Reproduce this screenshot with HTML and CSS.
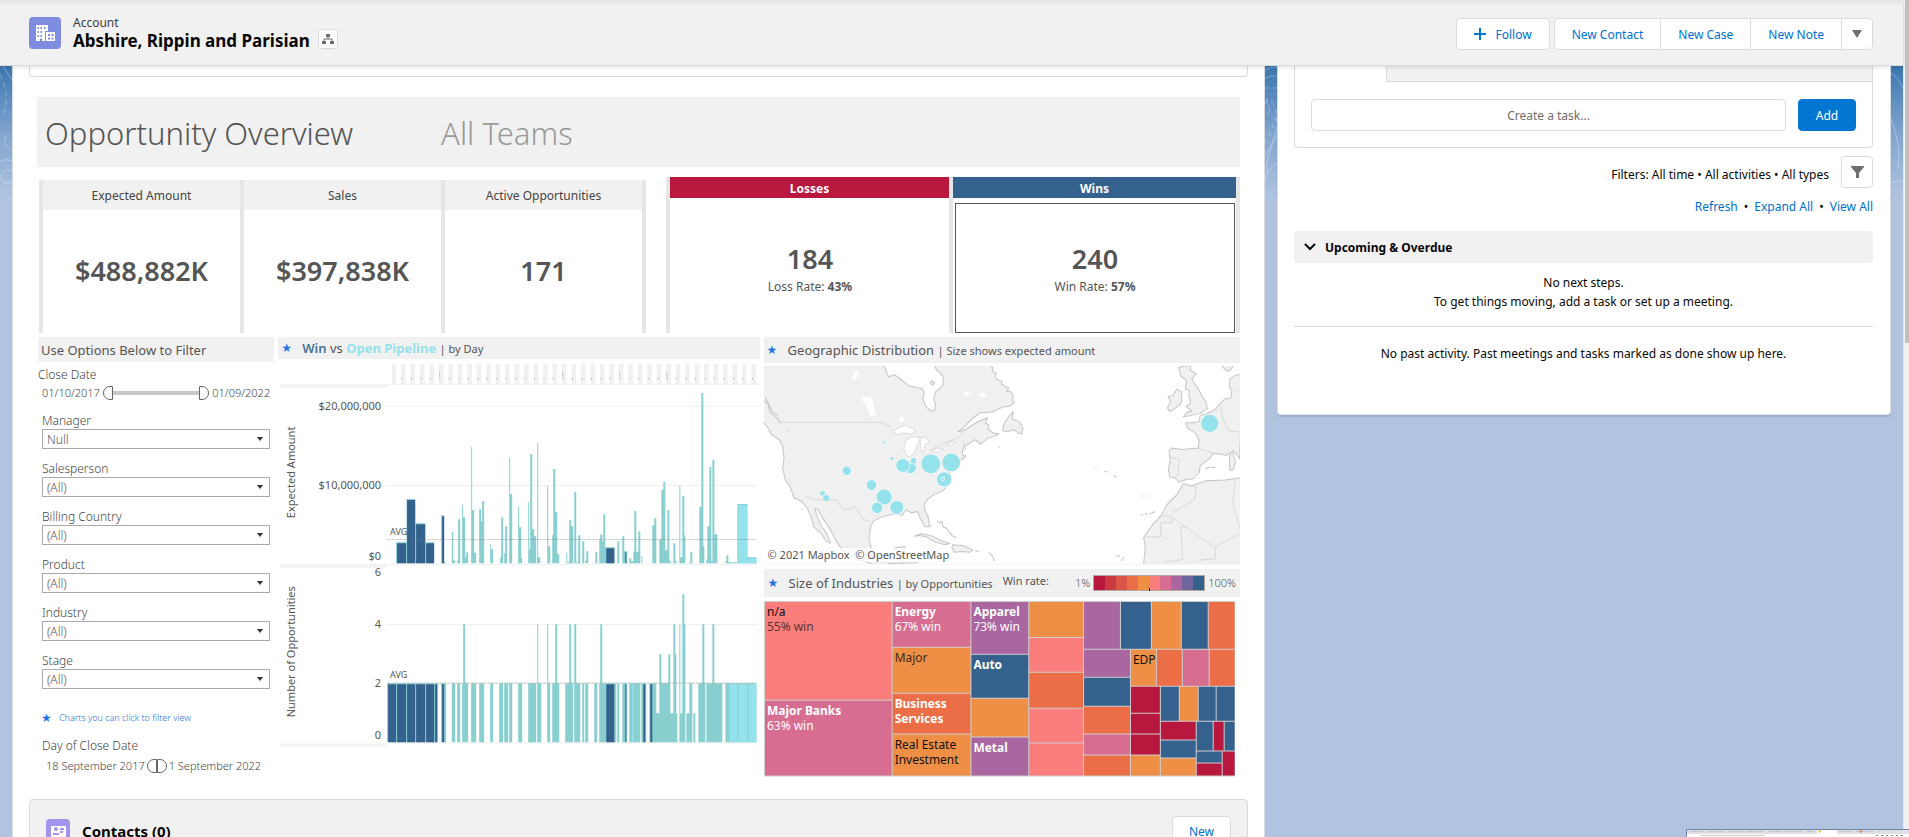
FILE: index.html
```html
<!DOCTYPE html>
<html lang="en">
<head>
<meta charset="utf-8">
<title>Abshire, Rippin and Parisian | Account</title>
<link rel="stylesheet" href="styles.css">
</head>
<body>
<div class="app">
<header class="record-header">
  <svg class="account-icon" viewBox="0 0 32 32" aria-hidden="true"><rect width="32" height="32" rx="4" fill="#7f8de1"/><path fill="#fff" d="M7 8h12v6h-3v10H7zM17 15h9v9h-9z"/><path fill="#7f8de1" d="M8.500 10h1.500v2H8.500zM11.500 10H13v2h-1.500zM15 10h1.500v2H15zM8.500 14h1.500v2H8.500zM11.500 14H13v2h-1.500zM8.500 18h1.500v2H8.500zM11.500 18H13v2h-1.500zM11 21.500h2V24h-2zM19 17h2v2h-2zM22.500 17h2v2h-2zM19 20.500h2v2h-2zM22.500 20.500h2v2h-2z"/></svg>
  <div class="record-title"><p>Account</p><h1>Abshire, Rippin and Parisian</h1></div>
  <button class="icon-button hierarchy" aria-label="View account hierarchy"><svg viewBox="0 0 12 12" width="12" height="12"><path fill="#706e6b" d="M4 1h4v3H4zM0 8h4v3H0zM8 8h4v3H8z"/><path fill="none" stroke="#706e6b" d="M6 4v2M2 8V6h8v2"/></svg></button>
  <div class="actions">
    <button class="button follow"><svg viewBox="0 0 12 12" width="12" height="12"><path d="M6 0v12M0 6h12" stroke="#0076d3" stroke-width="2"/></svg>Follow</button>
    <div class="button-group"><button class="button">New Contact</button><button class="button">New Case</button><button class="button">New Note</button><button class="button more" aria-label="More actions"><svg viewBox="0 0 10 8" width="10" height="8"><path fill="#706e6b" d="M0 0h10L5 8z"/></svg></button></div>
  </div>
</header>
<div class="page">
<svg class="topography" viewBox="0 0 1903 130" preserveAspectRatio="none" aria-hidden="true"><g fill="none" stroke="#fff" stroke-opacity=".3"><path d="M3 0q5 8 9 14M6 68q-4 12 3 14M0 96q6-4 12-1M12 105q-9-4-11 6 2 9 11 5"/><path stroke-dasharray="5 4" d="M0 8q10 20 4 40"/><path d="M1264 5q7-5 13-4M1264 13q8-5 13-2M1264 40q5-12 3-4 5 11 0 13M1277 69q-13 25-10 38M1264 91q9-11 13-31M1264 119q4-18 13-22"/><path stroke-dasharray="5 4" d="M1264 22h13M1271 36q7 5 5 20M1264 78q7-9 12-28"/><path d="M1891 7q8 5 12 16M1891 52q11 30 7 50M1891 118q6-5 12-2"/></g></svg>
<main class="panel main-panel">
  <div class="card-tail"></div>
  <section class="dashboard" aria-label="Opportunity dashboard">
    <div class="dash-title"><h2>Opportunity Overview</h2><span>All Teams</span></div>
    <div class="kpis">
      <div class="totals">
        <div class="kpi"><h3>Expected Amount</h3><strong>$488,882K</strong></div>
        <div class="kpi"><h3>Sales</h3><strong>$397,838K</strong></div>
        <div class="kpi"><h3>Active Opportunities</h3><strong>171</strong></div>
      </div>
      <div class="outcomes">
        <div class="outcome losses"><h3>Losses</h3><div class="result"><strong>184</strong><p>Loss Rate: <b>43%</b></p></div></div>
        <div class="outcome wins"><h3>Wins</h3><div class="result"><strong>240</strong><p>Win Rate: <b>57%</b></p></div></div>
      </div>
    </div>
    <div class="boards">
      <form class="filters">
        <h3 class="bar">Use Options Below to Filter</h3>
        <p class="legend">Close Date</p>
        <div class="dates"><span>01/10/2017</span><div class="range"><input type="range" class="from" value="0" aria-label="Close date from"><input type="range" class="to" value="100" aria-label="Close date to"></div><span>01/09/2022</span></div>
        <div class="fields">
          <label class="field">Manager<span class="select"><select><option>Null</option></select></span></label>
          <label class="field">Salesperson<span class="select"><select><option>(All)</option></select></span></label>
          <label class="field">Billing Country<span class="select"><select><option>(All)</option></select></span></label>
          <label class="field">Product<span class="select"><select><option>(All)</option></select></span></label>
          <label class="field">Industry<span class="select"><select><option>(All)</option></select></span></label>
          <label class="field">Stage<span class="select"><select><option>(All)</option></select></span></label>
        </div>
        <p class="hint"><span class="star">★</span>Charts you can click to filter view</p>
        <p class="legend day">Day of Close Date</p>
        <div class="dates day-dates"><span>18 September 2017</span><div class="range closed"><input type="range" class="from" value="0" aria-label="Day from"><input type="range" class="to" value="100" aria-label="Day to"></div><span>1 September 2022</span></div>
      </form>
      <section class="trend">
        <h3 class="bar"><span class="star">★</span><span><b class="navy">Win</b> vs <b class="aqua">Open Pipeline</b> <small>| by Day</small></span></h3>
        <svg class="chart" viewBox="279 360 481 400" role="img" aria-label="Expected amount and number of opportunities by day">
          <svg x="275" y="330" width="490" height="240" viewBox="0 0 1470 720">
            <path d="M354 135H1446" stroke="#f1f1f1" stroke-width="60" stroke-dasharray="14 14.400" stroke-dashoffset="2"/>
            <path d="M382 149H1446" stroke="#999" stroke-width="3" stroke-dasharray="3 25.400"/>
            <path d="M496 126v18M865 126v18M1036 126v18M1177 126v18" stroke="#ccc" stroke-width="3"/>
            <path d="M339 166H1455M339 232H1446M339 469H1446M339 705H1449" stroke="#f0f0f0" stroke-width="3"/>
            <path d="M18 171H339M18 711H339" stroke="#f3f3f3" stroke-width="11"/>
            <path fill="#89cfcf" d="M366 702V639H397V510H424V582H454V639H480V702zM501 702V558h9V699h6V702zM533 702V608h4V693h6V702zM549 702V693h3V570h6V702zM564 702V528h3V564h6V685h3V669h6V702zM591 702V354h3V543h6V671h6V702zM615 702V540h6V576h3V516h6V702zM648 702V645h3V660h6V702zM678 702V684h3V564h6V702zM690 702V672h3V591h6V702zM705 702V387h3V495h6V702zM732 702V534h3V594h6V687h3V702zM762 702V519h3V660h3V375h6V600h6V621h6V702zM789 702V342h3V684h6V702zM819 702V471h3V651h6V702zM834 702V618h3V420h6V549h6V675h6V702zM876 702V672h3V699h6V573h6V591h6V702zM900 702V489h6V699h6V618h6V702zM924 702V636h6V702zM933 702V693h3V666h6V702zM963 702V669h6V702zM975 702V630h3V615h6V636h3V555h6V654h28V702zM1029 702V636h6V702zM1044 702V621h6V666h9V702zM1065 702V687h6V696h6V669h3V546h6V668h6V606h6V702zM1101 702V681h3V702zM1134 702V588h6V567h6V702zM1155 702V630h6V483h6V459h6V663h6V543h6V693h3V699h3V702zM1197 702V642h6V696h3V702zM1215 702V471h3V684h6V501h6V618h3V702zM1245 702V699h3V669h6V702zM1275 702V534h6V192h6V651h3V702zM1296 702V690h3V591h6V414h6V696h3V393h6V615h9V702zM1353 702V696h3V678h6V699h27V525h30V684h27V702z"/>
            <path fill="#34618e" d="M369 702V642h27V702zM399 702V513h24V702zM426 702V585h27V702zM456 702V642h24V702zM504 702V561h6V702zM996 702V657h24V702zM1053 702V669h3V702z"/>
            <path fill="#93e2ec" d="M1392 702V528h27V702zM1421 702V687h25V702z"/>
            <path d="M339 631H1446" stroke="#777" stroke-opacity=".4" stroke-width="3" stroke-dasharray="9 3"/>
          </svg>
          <svg x="275" y="560" width="490" height="200" viewBox="0 0 1470 600">
            <path d="M339 196H1446M339 373H1446M354 551H1453" stroke="#f0f0f0" stroke-width="3"/>
            <path d="M18 20H339M18 558H339" stroke="#f3f3f3" stroke-width="11"/>
            <path fill="#89cfcf" d="M339 549V372H492V549zM501 549V372h15V549zM533 549V372h10V549zM549 549V372h9V549zM564 549V372h3V195h6V372h9V549zM591 549V372h15V549zM615 549V372h15V549zM648 549V372h9V549zM675 549V372h12V549zM690 549V372h12V549zM705 549V372h9V549zM732 549V372h12V549zM762 549V372h24V549zM789 549V195h3V372h9V549zM819 549V195h3V372h6V549zM834 549V372h9V195h6V372h6V549zM873 549V372h12V195h6V372h6V549zM900 549V195h6V372h12V549zM924 549V372h6V549zM933 549V372h9V549zM960 549V372h9V549zM975 549V372h3V195h6V372h42V549zM1029 549V372h6V549zM1044 549V372h15V549zM1065 549V372h33V549zM1101 549V372h15V549zM1125 549V372h21V462h9V285h6V372h21V285h6V462h9V195h6V285h3V462h3V549zM1215 549V195h3V462h6V105h6V195h3V549zM1236 549V462h9V372h9V549zM1257 549V462h6V549zM1272 549V372h12V195h6V372h3V549zM1296 549V372h18V195h6V372h24V549zM1353 549V372h93V549z"/>
            <path fill="#34618e" d="M342 549V375h24V549zM369 549V375h27V549zM399 549V375h24V549zM426 549V375h27V549zM456 549V375h24V549zM483 549V375h6V549zM504 549V375h6V549zM996 549V375h24V549zM1053 549V375h3V549zM1107 549V375h6V549zM1128 549V375h6V549z"/>
            <path fill="#93e2ec" d="M1365 549V375h24V549zM1392 549V375h27V549zM1422 549V375h24V549zM1073 549V375h4V549z"/>
            <path d="M339 371H1446" stroke="#999" stroke-opacity=".5" stroke-width="3" stroke-dasharray="9 3"/>
          </svg>
          <g class="ticks"><text x="382" y="411">$20,000,000</text><text x="382" y="490">$10,000,000</text><text x="382" y="561">$0</text><text x="382" y="577">6</text><text x="382" y="629">4</text><text x="382" y="688">2</text><text x="382" y="740">0</text></g>
          <g class="avg"><text x="391" y="536">AVG</text><text x="391" y="679">AVG</text></g>
          <g class="axis"><text transform="translate(296 519) rotate(-90)">Expected Amount</text><text transform="translate(296 718) rotate(-90)">Number of Opportunities</text></g>
        </svg>
      </section>
      <div class="right-boards">
        <section class="geo">
          <h3 class="bar"><span class="star">★</span><span>Geographic Distribution <small>| Size shows expected amount</small></span></h3>
          <div class="map">
          <svg viewBox="27 96 1428 594" role="img" aria-label="Map of expected amount">
            <g fill="#f0f0f0" stroke="#c4c4c4" stroke-width="3" stroke-linejoin="round">
              <path d="M20 90H385l7 18 8 20 18-6 22 16 20 17 22 5 20 4 5 12-4 20 10 22 14 12 12 0 2-18-5-20 6-20 14-10 8-12 0-20-8-12-12-10-4-8 0-20H697l4 12 12 8-2 10 12 10-4 6 8 12 14 4-2 8 8 6 14 6-8 10 12 0 10 14-4 8 6 14-14 8-22 4-30 14-36 2-26 20-24 25-16 12 22-6 36-24 30-12-6 16 10 6-2 12 16 12 16 2-14 8-20 6-22 18-6-8-10-6-14 10-18 10-5 16 2 12 7-1-1 6-18 10-12 16-14 8-3 12 4 14-8 22-10 12-14 10-16 6-22 16-10 16 2 16 10 20 4 30-14 0-14-26-8-20-18 4-16-9-12 17-20-5-24 5-18 5-24 12-9 18-4 34 6 28 16 34 46-10 10-24 30-4-3 28-12 50H400l-60-30-64-18-16-22-20-30-15-30-20-30-18-30-8-2 8 26 12 26 16 24 12 28-14-6-12-20-24-22-8-28-12-28-16-20-24-12-12-34-14-18-8-38 4-28-4-36-10-20-24-16-12-22-16-20-14-12z"/>
              <path d="M742 290l4-20 14-22 14-16-4 22 22 8 11 20-4 18-8-2-14-10-18 4z"/>
              <path d="M478 606l20-8 34 8 26 14 26 8-14 4-30-8-26-16-22-4zM592 632l30 2 32 14-10 6-26-2-20 2-8-12zM525 576l6-2M660 650l12 2M700 655l12 10 6 16M546 560l8 6 6-4 4 16 12 6 16 22 12 4M735 340l-6-2"/>
              <path d="M1236 222l10-20-8-14 16-4 10-18 14 6 2 22-4 16-18 14-14 8zM1270 100l36-6-2 14 18 12-12 14 6 12 14 20 12 24 10 14 4 20-22 14-26 6-24 4 12-14 14-2-18-16 12-6 2-14-6-8 2-18-12-6 4-24-18-14zM1398 94h36l-8 14-12 4zM1424 356l8-4 8 30-6 24-10 4-2-22zM1350 405l10-6 6 0M1368 400l12 0"/>
              <path d="M1460 120l-20 4-16 10-2 24 8 12-4 22-16 2-18 16-14 18-26 12-18 4-2 18-14 4-27 0 6 16 24 16 10 20-2 24-50 4-30-4-8 8 4 28-6 26 4 24 16 4 14 12 16-6 24-4 18-18 4-22 30-22 6-12 20-2 22 6 22-14 18 24z"/>
              <path d="M1460 430l-50 8-58 2-44 16-24-8-18 32-30 30-20 36-26 28-25 36 5 30-6 60H1460z"/>
              <path d="M27 200l12 10 6 26 20 14 12 18M30 190l10 18 12 26 16 10M1048 412l10 2M1076 424l8 6M1020 402h4M1156 540l8 4M1170 536l6 6M1182 540l18-8M1164 486h4M1082 664l12 2M1098 680l8-12M400 688l90-2M140 528l-2-4M526 146l6-6 6 8-6 6z"/>
            </g>
            <g fill="#fff" stroke="#cfcfcf" stroke-width="2"><path d="M412 294l20-14 20-6 30 14-12 12-26-4-18 6zM456 366l-10-20 4-24 16-12 20-2 18 4-14 12-8 22-8 14-10 8zM490 312l20-4 12 16-12 8-8 26-6-16 0-20zM528 350l20-8 16 2-20 12zM572 332l14-8 18 0-14 10z"/></g>
            <path fill="#fff" d="M316 192l22-6 12 6 8 30 6 24-10-4-8 6-10-28zM290 134l12-26 8 6-8 22zM622 182l12-12 12 14zM670 186l10-14 14 14-10 4zM434 250h12l-2 14-12-4z"/>
            <path fill="none" stroke="#cdcdcd" stroke-width="2" d="M78 265H375l34 14M524 350l40-22 44-16 16-20M632 350l-8-28M150 487l34 10h60l20 28h20l14-8 28 40 18 6M1250 370l22 6-6 52M1325 343l50 14M1395 215l8 40 16 36M1418 290l36 4M1284 450l38 8-4 38-66 40M1250 546h-40M1250 550l128 90 76-42M1250 550v16h-34v42h-46M1290 578h-14l6 98-52 8M1440 434l-8 70 22 80M1380 640v34l-50 4"/>
            <g fill="#93e2ec" stroke="#f4f4f4" stroke-width="3"><circle cx="275" cy="410" r="14"/><circle cx="465" cy="400" r="19"/><circle cx="443" cy="394" r="21"/><circle cx="475" cy="380" r="10"/><circle cx="527" cy="389" r="30"/><circle cx="588" cy="385" r="28"/><circle cx="567" cy="436" r="23"/><circle cx="563" cy="434" r="5"/><circle cx="349" cy="453" r="16"/><circle cx="387" cy="489" r="24"/><circle cx="425" cy="520" r="21"/><circle cx="366" cy="521" r="17"/><circle cx="203" cy="478" r="9"/><circle cx="213" cy="492" r="11"/><circle cx="388" cy="325" r="5"/><circle cx="410" cy="373" r="6"/><circle cx="98" cy="288" r="4"/><circle cx="257" cy="458" r="3"/><circle cx="1363" cy="268" r="27"/></g>
          </svg>
          <p class="credit">© 2021 Mapbox&nbsp; © OpenStreetMap</p>
          </div>
        </section>
        <section class="industries">
          <div class="bar"><span class="star">★</span><h3>Size of Industries <small>| by Opportunities</small></h3><span class="win-rate">Win rate:</span><div class="scale"><span>1%</span><svg viewBox="0 0 112 16" width="112" height="16" aria-hidden="true"><path fill="#b3a79c" d="M0 0h112v16H0z"/><path fill="#b8173e" d="M1 1h11v14H1z"/><path fill="#c93a43" d="M12 1h11v14H12z"/><path fill="#db5549" d="M23 1h11v14H23z"/><path fill="#ec6e48" d="M34 1h11v14H34z"/><path fill="#ef8f46" d="M45 1h11v14H45z"/><path fill="#f97e7c" d="M56 1h11v14H56z"/><path fill="#d86d92" d="M67 1h11v14H67z"/><path fill="#a966a1" d="M78 1h11v14H78z"/><path fill="#6f66a0" d="M89 1h11v14H89z"/><path fill="#34618e" d="M100 1h11v14h-11z"/><path stroke="#000" d="M56.500 13v3"/></svg><span>100%</span></div></div>
          <svg class="treemap" viewBox="764 601 473 176" role="img" aria-label="Industries by opportunities">
            <svg x="755" y="560" width="500" height="230" viewBox="0 0 1500 690">
              <path fill="#cfcfcf" d="M27 123H1446V651H27z"/>
              <path fill="#f97e7c" d="M30 126H411V420H30zM825 234H987V336H825zM825 447H987V549H825zM825 552H987V648H825z"/>
              <path fill="#d86d92" d="M30 423H411V648H30zM414 126H648V261H414zM990 525H1128V585H990zM1287 270H1365V378H1287z"/>
              <path fill="#ee8f45" d="M414 264H648V399H414zM414 525H648V648H414zM651 417H822V531H651zM825 126H987V231H825zM1194 126H1281V267H1194zM1131 270H1206V378H1131zM1278 381H1332V483H1278zM1131 588H1218V648H1131zM1221 597H1326V648H1221z"/>
              <path fill="#ec6e47" d="M414 402H648V522H414zM825 339H987V444H825zM990 441H1128V522H990zM990 588H1128V648H990zM1365 126H1443V267H1365zM1209 270H1284V378H1209zM1368 270H1443V378H1368z"/>
              <path fill="#a966a1" d="M651 126H822V282H651zM651 534H822V648H651zM990 126H1098V267H990zM990 270H1128V351H990z"/>
              <path fill="#34618e" d="M651 285H822V414H651zM990 354H1128V438H990zM1101 126H1191V267H1101zM1284 126H1362V267H1284zM1221 381H1275V483H1221zM1335 381H1386V483H1335zM1389 381H1443V483H1389zM1329 486H1377V573H1329zM1413 486H1443V573H1413zM1221 543H1326V594H1221zM1329 576H1404V609H1329z"/>
              <path fill="#b8173e" d="M1131 381H1218V459H1131zM1131 462H1218V522H1131zM1131 525H1218V585H1131zM1221 486H1326V540H1221zM1380 486H1410V573H1380zM1329 612H1404V648H1329zM1407 576H1443V648H1407z"/>
            </svg>
            <g class="tm-dark"><text x="767" y="616">n/a</text><text x="767" y="631" opacity=".7">55% win</text><text x="895" y="662" opacity=".8">Major</text><text x="895" y="749">Real Estate</text><text x="895" y="764">Investment</text><text x="1134" y="664">EDP</text></g>
            <g class="tm-light"><text x="767" y="715">Major Banks</text><text class="plain" x="767" y="730">63% win</text><text x="895" y="616">Energy</text><text class="plain" x="895" y="631">67% win</text><text x="895" y="708">Business</text><text x="895" y="723">Services</text><text x="974" y="616">Apparel</text><text class="plain" x="974" y="631">73% win</text><text x="974" y="669">Auto</text><text x="974" y="752">Metal</text></g>
          </svg>
        </section>
      </div>
    </div>
  </section>
  <section class="contacts">
    <svg viewBox="0 0 24 24" width="24" height="24" aria-hidden="true"><rect width="24" height="24" rx="4" fill="#a094ed"/><rect x="5" y="7" width="15" height="11" rx="1" fill="#fff"/><circle cx="10" cy="10" r="2" fill="#a094ed"/><path stroke="#a094ed" stroke-width="2" d="M7 15h6M14 10h4M14 13h3"/></svg>
    <h2>Contacts (0)</h2><button class="button">New</button>
  </section>
</main>
<aside class="panel activity">
  <div class="composer"><div class="tab-strip"></div><form class="task"><input type="text" placeholder="Create a task..." aria-label="Create a task"><button type="button" class="button primary">Add</button></form></div>
  <div class="filter-line"><p>Filters: All time • All activities • All types</p><button class="icon-button funnel" aria-label="Filter"><svg viewBox="0 0 13 12" width="13" height="12"><path fill="#706e6b" d="M0 0h13v1L8 7v5H5V7L0 1z"/></svg></button></div>
  <p class="links"><a href="#refresh">Refresh</a><span>•</span><a href="#expand">Expand All</a><span>•</span><a href="#view">View All</a></p>
  <h2 class="upcoming"><svg viewBox="0 0 12 8" width="12" height="8" aria-hidden="true"><path fill="none" stroke="#080707" stroke-width="2" d="M1 1l5 5 5-5"/></svg>Upcoming &amp; Overdue</h2>
  <p class="note">No next steps.<br>To get things moving, add a task or set up a meeting.</p>
  <p class="note past">No past activity. Past meetings and tasks marked as done show up here.</p>
</aside>
</div>
</div>
<div class="scrollbar" aria-hidden="true"><div></div></div>
<svg class="preview" viewBox="0 0 223 8" aria-hidden="true"><path fill="#dfdfe6" d="M0 0h223v5H0z"/><path fill="#fff" d="M131 1h20v4h-20zM1 5h222v3H1z"/><g fill="none"><path stroke="#c4c4cc" stroke-dasharray="14 3 18 4" d="M4 2.500h124M153 2.500h40"/><path stroke="#ccc" d="M14 6.500h65"/><path stroke="#6d84a8" d="M.500 8V.500H223"/><path stroke="#f0c75e" stroke-width="2" d="M132 2.500h3"/><path stroke="#ec7d44" stroke-width="2" d="M174 2.500h2"/><path stroke="#7a86a0" stroke-dasharray="2 3" d="M190 6.500h30"/></g></svg>
</body>
</html>
```
FILE: styles.css
```css
* { box-sizing: border-box; }
html, body { height: 100%; margin: 0; }
body { position: relative; display: flex; overflow: hidden; background: #b0c4df; color: #080707; font: 12px/19px "Noto Sans", "Open Sans", sans-serif; }
h1, h2, h3, p { margin: 0; font-size: inherit; font-weight: inherit; }
button, input, select { font: inherit; color: inherit; }
button { cursor: pointer; }
svg { display: block; }
.app { flex: 1; min-width: 0; display: flex; flex-direction: column; }

.record-header { position: relative; z-index: 2; flex: none; display: flex; align-items: center; height: 66px; padding: 0 30px 0 29px; background: linear-gradient(#e2e2e2, #f1f1f1 6px); border-bottom: 1px solid #d8d8d8; box-shadow: 0 2px 4px rgba(0, 0, 0, .1); }
.account-icon { width: 32px; height: 32px; margin-right: 12px; }
.record-title p { line-height: 16px; color: #3e3e3c; }
.record-title h1 { font-size: 17px; line-height: 20px; font-weight: 700; }
.icon-button { display: flex; align-items: center; justify-content: center; padding: 0; background: #fff; border: 1px solid #dddbda; border-radius: 4px; }
.hierarchy { width: 20px; height: 20px; margin: 12px 0 0 8px; }
.actions { display: flex; gap: 4px; margin: 3px 0 0 auto; }
.button { height: 32px; padding: 0 16px; background: #fff; border: 1px solid #dddbda; border-radius: 4px; color: #0070d2; white-space: nowrap; }
.actions .button { padding: 0 17px; }
.follow { display: flex; align-items: center; gap: 10px; }
.button-group { display: flex; }
.button-group .button { margin-left: -1px; border-radius: 0; }
.button-group .button:first-child { margin-left: 0; border-radius: 4px 0 0 4px; }
.button-group .button.more { width: 32px; padding: 0 10px; border-radius: 0 4px 4px 0; }

.page { position: relative; flex: 1; min-height: 0; display: grid; grid-template-columns: minmax(0, 1253fr) minmax(0, 614fr); gap: 12px; align-items: start; padding: 0 12px; overflow: hidden; background: linear-gradient(#3b77b0, #7fa3ce 65px, #b0c4df 132px); }
.topography { position: absolute; top: 0; left: 0; width: 100%; height: 130px; }
.panel { position: relative; background: #fff; border: 1px solid #d8dde6; border-top: 0; }
.main-panel { padding: 0 16px; }
.card-tail { height: 11px; border: 1px solid #dddbda; border-top: 0; border-radius: 0 0 4px 4px; }

.dashboard { padding: 20px 8px 0; color: #555; }
.dash-title { display: flex; align-items: center; gap: 88px; height: 70px; padding: 2px 8px 0; background: #f1f1f1; font-size: 31px; line-height: 40px; font-weight: 300; }
.dash-title span { color: #9a9a9a; }
.kpis { display: grid; grid-template-columns: 607fr 574fr; gap: 20px; padding: 10px 0 0 2px; }
.kpi h3, .kpi strong, .outcome h3 { text-align: center; }
.totals { display: grid; grid-template-columns: repeat(3, 1fr); margin-top: 3px; border-right: 4px solid #e6e6e6; }
.kpi { border-left: 4px solid #e6e6e6; }
.kpi h3 { height: 30px; line-height: 32px; background: #f1f1f1; color: #444; }
.kpi strong { display: block; padding-top: 41px; height: 123px; font-size: 27px; line-height: 40px; font-weight: 600; }
.outcomes { display: grid; grid-template-columns: 283fr 287fr; border-right: 4px solid #e6e6e6; }
.outcome { display: flex; flex-direction: column; height: 156px; border-left: 4px solid #e6e6e6; }
.outcome h3 { height: 21px; line-height: 24px; color: #fff; font-weight: 700; }
.losses h3 { background: #b8173e; }
.wins h3 { background: #34618e; }
.result { flex: 1; margin: 5px 1px 0 2px; padding-top: 35px; border: 1px solid transparent; text-align: center; }
.wins .result { border-color: #555; }
.result strong { display: block; font-size: 27px; line-height: 40px; font-weight: 600; }
.result p { line-height: 15px; }

.boards { display: grid; grid-template-columns: minmax(0, 237fr) minmax(0, 481fr) minmax(0, 476fr); gap: 4px; padding-top: 4px; }
.bar { display: flex; align-items: center; background: #f1f1f1; font-size: 13px; line-height: 20px; color: #555; white-space: nowrap; }
.bar small { font-size: 11px; }
.star { width: 21px; color: #2672e6; font: 12px/12px "DejaVu Sans", sans-serif; }
.filters { display: flex; flex-direction: column; padding-left: 1px; font-weight: 300; color: #444; }
.filters .bar { height: 25px; padding: 0 3px; font-weight: 400; }
.legend { margin-top: 4px; line-height: 18px; }
.dates { display: flex; align-items: center; gap: 3px; height: 17px; padding: 0 4px; font-size: 11px; line-height: 17px; white-space: nowrap; }
.range { position: relative; flex: 1; height: 14px; background: linear-gradient(#c8c8c8, #c8c8c8) center / 100% 4px no-repeat; }
.range input { position: absolute; inset: 0; width: 100%; height: 14px; margin: 0; appearance: none; background: none; pointer-events: none; }
.range input::-webkit-slider-thumb { appearance: none; pointer-events: auto; width: 10px; height: 14px; border: 1px solid #666; background: #fff; border-radius: 7px 0 0 7px; }
.range .to::-webkit-slider-thumb { border-radius: 0 7px 7px 0; }
.range.closed { flex: none; width: 20px; }
.fields { display: flex; flex-direction: column; gap: 11px; margin-top: 11px; padding: 0 4px; }
.field { display: block; line-height: 17px; }
.select { position: relative; display: block; }
.select::after { content: ""; position: absolute; right: 7px; top: 8px; border: 3px solid transparent; border-top: 4px solid #333; border-bottom: 0; pointer-events: none; }
.select select { display: block; width: 100%; height: 20px; padding: 0 4px; border: 1px solid #aaa; border-radius: 0; background: #fff; appearance: none; color: #555; line-height: 17px; }
.hint { display: flex; align-items: center; margin: 20px 0 0 3px; font-size: 9px; line-height: 17px; color: #2672e6; }
.hint .star { width: 18px; }
.legend.day { margin: 11px 0 0 4px; }
.day-dates { margin-top: 2px; padding: 0 8px; gap: 2px; }

.trend .bar { height: 22px; padding-left: 3px; }
.navy { color: #4a7198; font-weight: 600; }
.aqua { color: #93e2ec; font-weight: 700; }
.chart, .treemap, .map svg { width: 100%; height: auto; }
.chart text { font-size: 11px; fill: #555; }
.ticks text { text-anchor: end; }
.chart .avg text { font-size: 9px; }
.right-boards { min-width: 0; }
.geo .bar { height: 26px; padding-left: 3px; }
.map { position: relative; margin-top: 3px; border-bottom: 1px solid #f6f6f6; }
.credit { position: absolute; left: 2px; bottom: 2px; padding: 0 2px; background: rgba(255, 255, 255, .75); line-height: 14px; font-size: 11px; }
.industries .bar { height: 28px; margin: 4px 0; padding: 0 4px; }
.win-rate { margin-left: 10px; line-height: 24px; font-size: 11px; align-self: flex-start; }
.scale { display: flex; align-items: center; gap: 3px; margin-left: auto; font-size: 11px; font-weight: 300; }
.treemap { width: 99%; }
.treemap text { font-size: 12px; }
.tm-dark { fill: #111; }
.tm-light { fill: #fff; font-weight: 700; }
.tm-light .plain { font-weight: 400; }

.contacts { display: flex; align-items: flex-start; height: 80px; margin-top: 22px; padding: 16px 16px 0; background: #f1f1f1; border: 1px solid #d8d8d8; border-radius: 4px; }
.contacts svg { margin-top: 3px; }
.contacts h2 { margin: 3px auto 0 12px; font-size: 15px; line-height: 24px; font-weight: 700; }

.activity { padding: 0 17px 51px 16px; border-radius: 0 0 4px 4px; box-shadow: 0 2px 2px rgba(0, 0, 0, .1); }
.composer { border: 1px solid #dddbda; border-top: 0; border-radius: 0 0 4px 4px; }
.tab-strip { height: 16px; margin-left: 91px; background: #f1f1f1; border: 1px solid #dddbda; border-width: 0 0 1px 1px; }
.task { display: flex; gap: 12px; padding: 17px 16px 16px; }
.task input { flex: 1; min-width: 0; height: 32px; border: 1px solid #dddbda; border-radius: 4px; text-align: center; }
.task input::placeholder { color: #706e6b; }
.primary { width: 58px; background: #0176d3; border-color: #0176d3; color: #fff; }
.filter-line { display: flex; align-items: center; justify-content: flex-end; gap: 12px; margin-top: 8px; }
.filter-line p { padding-top: 4px; }
.funnel { width: 32px; height: 32px; }
.links { display: flex; justify-content: flex-end; gap: 6px; padding: 9px 0 15px; }
.links a { color: #0070d2; text-decoration: none; }
.upcoming { display: flex; align-items: center; gap: 9px; height: 32px; padding: 0 10px; background: #f1f1f1; border-radius: 4px; font-weight: 700; }
.note { padding: 10px 0 15px; text-align: center; }
.past { padding: 17px 0 0; border-top: 1px solid #dddbda; }

.scrollbar { width: 6px; background: #f1f1f1; border-left: 1px solid #e6e6e6; }
.scrollbar div { height: 41%; margin-left: 1px; background: #c1c1c1; }
.preview { position: absolute; z-index: 3; right: 0; bottom: 0; width: 223px; height: 8px; }
```
